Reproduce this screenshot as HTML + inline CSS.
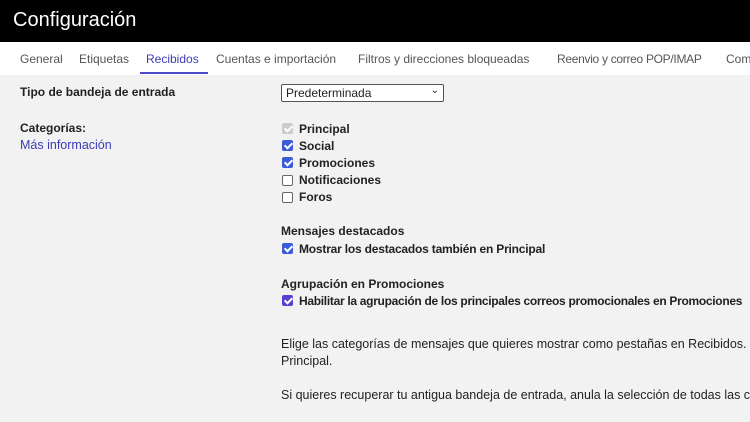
<!DOCTYPE html>
<html><head><meta charset="utf-8"><style>
body{margin:0;width:750px;height:422px;overflow:hidden;background:#f2f2f2;font-family:"Liberation Sans",sans-serif;color:#222;position:relative}
.hdr{position:absolute;left:0;top:0;width:750px;height:42px;background:#000;color:#fff;font-size:20px}
.hdr span{position:absolute;left:13px;top:9px}
.tabs{position:absolute;left:0;top:42px;width:750px;height:33px;background:#fff;font-size:12px;color:#555;white-space:nowrap;overflow:hidden}
.tabs span{position:absolute;top:10px}
.ul{position:absolute;left:140px;top:72px;width:68px;height:2px;background:#4a4ac8}
.wrap{position:absolute;left:0;top:75px;width:750px;height:347px;overflow:hidden}
.t{position:absolute;white-space:nowrap;font-size:12.5px}
.b{font-weight:bold;font-size:12px}
.cb{position:absolute;width:11px;height:11px;border-radius:2px;background:#3b5bdb;}
.cb::after{content:"";position:absolute;left:3.5px;top:1px;width:3px;height:6px;border:solid #fff;border-width:0 2px 2px 0;transform:rotate(45deg)}
.cb.e{background:#fff;border:1px solid #666;width:9px;height:9px}
.cb.e::after{display:none}
.cb.g{background:#ccc}
.sel{position:absolute;left:281px;top:9px;width:161px;height:16px;border:1px solid #555;border-radius:2px;background:#fff;font-size:12px}
</style></head><body>
<div class="hdr"><span>Configuración</span></div>
<div class="tabs">
<span style="left:20px">General</span>
<span style="left:79px">Etiquetas</span>
<span style="left:146px;color:#3b3bb8">Recibidos</span>
<span style="left:216px">Cuentas e importación</span>
<span style="left:358px">Filtros y direcciones bloqueadas</span>
<span style="left:557px;letter-spacing:-0.3px">Reenvio y correo POP/IMAP</span>
<span style="left:726px">Com</span>
</div>
<div class="ul"></div>
<div class="wrap">
<div class="t b" style="left:20px;top:10px">Tipo de bandeja de entrada</div>
<div class="sel"><span style="position:absolute;left:4px;top:1px">Predeterminada</span><span style="position:absolute;right:4px;top:0px;font-size:10px">&#8964;</span></div>
<div class="t b" style="left:20px;top:46px">Categorías:</div>
<div class="t" style="left:20px;top:63px;color:#3b3bb8">Más información</div>
<div class="cb g" style="left:282px;top:48px"></div><div class="t b" style="left:299px;top:47px">Principal</div>
<div class="cb" style="left:282px;top:65px"></div><div class="t b" style="left:299px;top:64px">Social</div>
<div class="cb" style="left:282px;top:82px"></div><div class="t b" style="left:299px;top:81px">Promociones</div>
<div class="cb e" style="left:282px;top:100px"></div><div class="t b" style="left:299px;top:98px">Notificaciones</div>
<div class="cb e" style="left:282px;top:117px"></div><div class="t b" style="left:299px;top:115px">Foros</div>
<div class="t b" style="left:281px;top:149px">Mensajes destacados</div>
<div class="cb" style="left:282px;top:168px"></div><div class="t b" style="left:299px;top:167px;letter-spacing:-0.2px">Mostrar los destacados también en Principal</div>
<div class="t b" style="left:281px;top:202px">Agrupación en Promociones</div>
<div class="cb" style="left:282px;top:220px;background:#5b3fd0"></div><div class="t b" style="left:299px;top:219px;letter-spacing:-0.3px">Habilitar la agrupación de los principales correos promocionales en Promociones</div>
<div class="t" style="left:281px;top:262px">Elige las categorías de mensajes que quieres mostrar como pestañas en Recibidos. Los</div>
<div class="t" style="left:281px;top:279px">Principal.</div>
<div class="t" style="left:281px;top:313px">Si quieres recuperar tu antigua bandeja de entrada, anula la selección de todas las categorías</div>
</div>
</body></html>
